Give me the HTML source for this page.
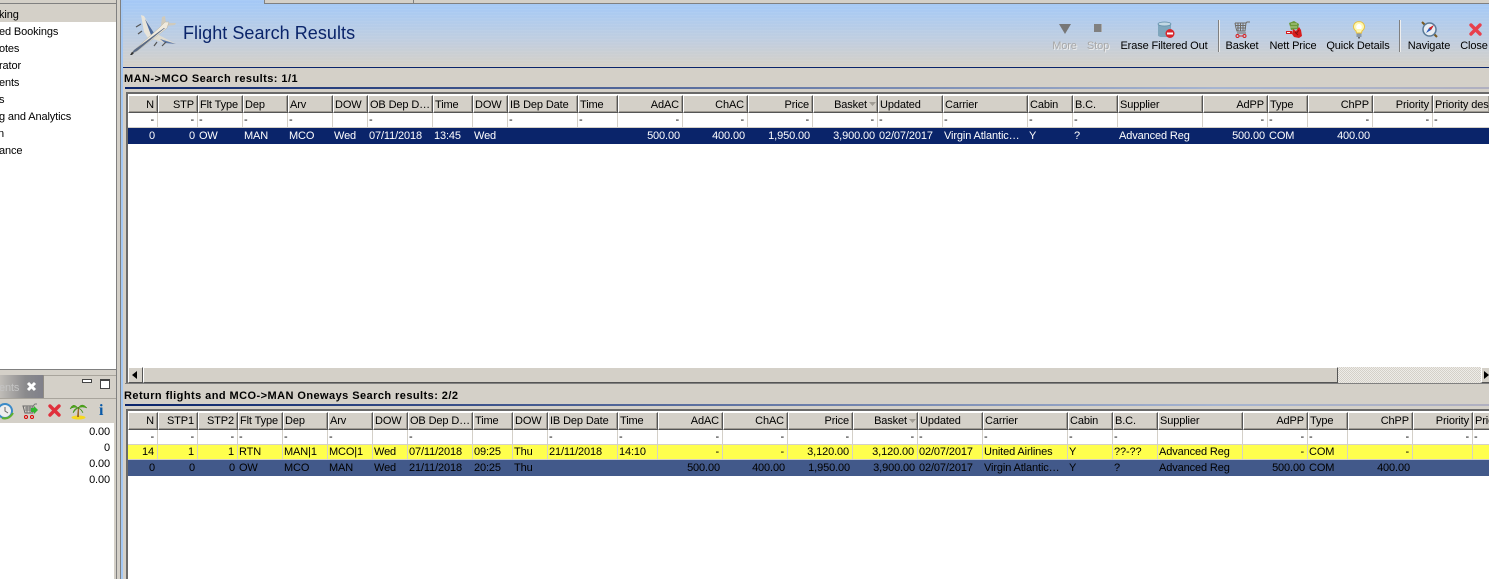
<!DOCTYPE html>
<html><head><meta charset="utf-8"><title>Flight Search Results</title>
<style>
html,body{margin:0;padding:0}
body{width:1489px;height:579px;overflow:hidden;position:relative;background:#d4d0c8;font:11px "Liberation Sans",sans-serif;letter-spacing:-.12px;color:#000}
.a{position:absolute}
.t{position:absolute;white-space:nowrap;line-height:14px}
table{position:absolute;left:128px;border-collapse:separate;border-spacing:0;table-layout:fixed;background:#fff}
td{padding:0 0 0 1px;white-space:nowrap;overflow:hidden;box-sizing:border-box;line-height:14px}
tr.h td{height:18px;background:#d4d0c8;border:1px solid;border-color:#fff #555 #555 #fff;box-shadow:inset -1px -1px 0 #a09c94;padding:0 0 0 1px}
tr.h td.r{text-align:right;padding:0 3px 0 0}
tr.f td{height:15px;background:#fff;border-right:1px solid #d4d0c8;border-bottom:1px solid #d4d0c8;padding-left:1px}
tr.y td{height:15px;background:#ffff4d;border-right:1px solid #d4d0c8;border-bottom:1px solid #d4d0c8;padding:1px 0 0 1px;line-height:13px}
tr.s td{height:16px;background:#0a246a;color:#fff;padding-left:1px}
tr.b td{height:16px;background:#42598a;color:#000;padding-left:1px}
td.r{text-align:right}
tr.f td.r,tr.s td.r,tr.b td.r{padding:0 3px 0 0}
tr.y td.r{padding:1px 3px 0 0}
.top tr.h td{padding-top:1px}
.top tr.h td.r{padding:1px 3px 0 0}
.sort{padding-right:10px !important;position:relative}
.lb{position:absolute;top:39px;white-space:nowrap;line-height:14px;transform:translateX(-50%)}
.dis{color:#a8a8a8;text-shadow:1px 1px 0 #eee}
.sep{position:absolute;top:20px;width:1px;height:32px;background:#808080;box-shadow:1px 0 0 #eee}
.bold{font-weight:bold;letter-spacing:.44px}
svg{position:absolute;overflow:visible}
</style></head><body>

<!-- left panel -->
<div class="a" style="left:0;top:0;width:116px;height:369px;background:#fff"></div>
<div class="a" style="left:0;top:0;width:116px;height:3px;background:#d4d0c8"></div>
<div class="a" style="left:0;top:3px;width:116px;height:1px;background:#808080"></div>
<div class="a" style="left:0;top:4px;width:116px;height:18px;background:#d4d0c8"></div>
<div class="t" style="left:-1px;top:8px">king</div>
<div class="t" style="left:-1px;top:25px">ed Bookings</div>
<div class="t" style="left:-1px;top:42px">otes</div>
<div class="t" style="left:-1px;top:59px">rator</div>
<div class="t" style="left:-1px;top:76px">ents</div>
<div class="t" style="left:-1px;top:93px">s</div>
<div class="t" style="left:-1px;top:110px">g and Analytics</div>
<div class="t" style="left:-2px;top:127px">n</div>
<div class="t" style="left:-1px;top:144px">ance</div>

<div class="a" style="left:116px;top:0;width:1px;height:579px;background:#808080"></div>
<div class="a" style="left:120px;top:0;width:1px;height:579px;background:#808080"></div>
<div class="a" style="left:121px;top:0;width:2px;height:579px;background:#a4c8f4"></div>

<!-- bottom-left panel -->
<div class="a" style="left:0;top:369px;width:116px;height:1px;background:#808080"></div>
<div class="a" style="left:44px;top:375px;width:72px;height:1px;background:#a8a49c"></div>
<div class="a" style="left:0;top:375px;width:43px;height:23px;background:linear-gradient(90deg,#c0bdb8,#8a8a8c 60%,#80808a)"></div>
<div class="a" style="left:43px;top:375px;width:1px;height:23px;background:#908c84"></div>
<div class="a" style="left:0;top:398px;width:116px;height:1px;background:#a8a49c"></div>
<div class="t" style="left:-1px;top:381px;color:#c4c4c4">ents</div>
<svg style="left:26px;top:381px" width="11" height="11" viewBox="0 0 11 11"><path d="M2 2l7 7M9 2l-7 7" stroke="#fff" stroke-width="3"/></svg>
<div class="a" style="left:82px;top:379px;width:8px;height:2px;border:1px solid #444;background:#fff"></div>
<div class="a" style="left:100px;top:379px;width:8px;height:7px;border:1px solid #444;border-top-width:2px;background:#fff"></div>
<svg style="left:0;top:402px" width="14" height="18" viewBox="0 0 14 18"><circle cx="5" cy="9" r="7" fill="#eee" stroke="#3a8ac8" stroke-width="2"/><path d="M5 5v4l3 2" stroke="#666" fill="none"/><path d="M2 16q7 2 11-5" stroke="#5cb030" stroke-width="2" fill="none"/></svg>
<svg style="left:22px;top:403px" width="17" height="16" viewBox="0 0 17 16"><path d="M1 3h10v7H3z" fill="none" stroke="#666"/><path d="M3 5h8M3 7h8M5 3v7M8 3v7M11 3l2-2h2" stroke="#777" fill="none"/><path d="M9 5h3V3l4 4-4 4V9H9z" fill="#2fb52f"/><circle cx="4" cy="14" r="1.5" fill="none" stroke="#d00"/><circle cx="10" cy="14" r="1.5" fill="none" stroke="#d00"/></svg>
<svg style="left:48px;top:404px" width="13" height="13" viewBox="0 0 13 13"><path d="M2 2l9 9M11 2l-9 9" stroke="#e0303c" stroke-width="3.4" stroke-linecap="round"/></svg>
<svg style="left:70px;top:402px" width="17" height="18" viewBox="0 0 17 18"><ellipse cx="8.500" cy="15.500" rx="7" ry="2" fill="#f6d820"/><path d="M8 5l1 0 0 10h-2z" fill="#9a6a28"/><path d="M8 6Q3 0 0 7q4-3 8-1Q12 0 17 6q-5-2-9 0Q4 6 3 11q3-4 5-5 3 1 5 5-1-4-5-5" fill="#4ca818" stroke="#3a8a10" stroke-width=".5"/></svg>
<div class="t" style="left:99px;top:403px;font:bold 16px 'Liberation Serif',serif;color:#0a5aa8;line-height:16px;letter-spacing:0">i</div>
<div class="a" style="left:0;top:423px;width:114px;height:156px;background:#fff"></div>
<div class="a" style="left:114px;top:399px;width:2px;height:180px;background:#d4d0c8"></div>
<div class="t" style="right:1379px;top:425px">0.00</div>
<div class="t" style="right:1379px;top:441px">0</div>
<div class="t" style="right:1379px;top:457px">0.00</div>
<div class="t" style="right:1379px;top:473px">0.00</div>

<!-- banner -->
<div class="a" style="left:123px;top:0;width:1366px;height:67px;background:repeating-linear-gradient(180deg,rgba(255,255,255,.05) 0 1px,rgba(255,255,255,0) 1px 3px),linear-gradient(180deg,#a4c8f6 0,#a8caf4 8px,#c0cee0 40px,#d4d0c8 66px)"></div>
<div class="a" style="left:264px;top:0;width:1225px;height:3px;background:#d4d0c8;border-bottom:1px solid #808080;border-left:1px solid #808080"></div>
<div class="a" style="left:413px;top:0;width:1px;height:3px;background:#808080"></div>
<div class="a" style="left:123px;top:67px;width:1366px;height:1px;background:#0a246a"></div>

<!-- plane -->
<svg style="left:129px;top:13px" width="50" height="42" viewBox="0 0 50 42">
<path d="M12 2l3 1 10 17-6 5-4-6z" fill="#e8e4da"/>
<path d="M16 6l9 14-3 2z" fill="#4c6a9c"/>
<path d="M21 25l5-5 21 11-11-1z" fill="#e0dcd0"/>
<path d="M31 26l16 5-11-1z" fill="#5c78a8"/>
<path d="M33 4l3-1 1 7 10 0-1 2-9 1-5-1z" fill="#cfcabc"/>
<path d="M2 40L30 15l6-6 4 0-2 6L7 39z" fill="#f0eadd" stroke="#b8b4a4" stroke-width=".5"/>
<path d="M2 41L8 38 36 15l-1 0L5 37z" fill="#5a6a84"/>
<path d="M1 42l2-3 2 1-2 2z" fill="#333"/>
<path d="M7 14l5-3M9 21l4-3M25 33l3-4M33 33l4-4" stroke="#555" stroke-width="1.2"/>
</svg>
<div class="t" style="left:183px;top:22px;font-size:18px;line-height:22px;color:#0a246a;letter-spacing:.05px">Flight Search Results</div>

<!-- toolbar icons -->
<svg style="left:1058px;top:23px" width="14" height="12" viewBox="0 0 14 12"><path d="M1 1h12L7 11z" fill="#777"/></svg>
<div class="a" style="left:1094px;top:24px;width:8px;height:8px;background:#808080;border-right:1px solid #aaa;box-sizing:border-box"></div>
<svg style="left:1157px;top:21px" width="18" height="18" viewBox="0 0 18 18"><path d="M1 3v11q0 2 5 2h4V3z" fill="#6f9cb6"/><path d="M1 3h13v6H10v7H6q-5 0-5-2z" fill="#7fa6bc"/><ellipse cx="7.500" cy="3" rx="6.500" ry="2" fill="#c2d8e4" stroke="#5a8aa6" stroke-width=".7"/><circle cx="13" cy="12.500" r="4.500" fill="#d8262c"/><rect x="10" y="11.500" width="6" height="2" fill="#fff"/></svg>
<svg style="left:1234px;top:21px" width="17" height="17" viewBox="0 0 17 17"><path d="M1 2h11l1-1h3M1 2l1 5 1 3h8l1-8M2 4.500h10M3 7h9M4 2v8M6.500 2v8M9 2v8" fill="none" stroke="#6e6a64"/><path d="M3 12h9" stroke="#6e6a64"/><circle cx="3.500" cy="15" r="1.500" fill="none" stroke="#d82020"/><circle cx="10.500" cy="15" r="1.500" fill="none" stroke="#d82020"/><path d="M5 15h4" stroke="#d82020"/></svg>
<svg style="left:1286px;top:21px" width="17" height="17" viewBox="0 0 17 17"><path d="M3 2l5-2 5 3-1 5-7 1z" fill="#6c9a3c"/><path d="M5 3h6M4 6h7" stroke="#b8d090"/><path d="M0 10h6v3H0z" fill="#d81c1c"/><path d="M1 11h3v1H1z" fill="#fff"/><path d="M7 8l3 2 3-4 2 3 1 6-3 2-5-1-2-3z" fill="#d81c1c"/><path d="M9 11l3 3M13 9l-3 4" stroke="#8a1010"/></svg>
<svg style="left:1353px;top:21px" width="12" height="18" viewBox="0 0 12 18"><path d="M6 .700a5 5 0 0 1 3 9.300l-.5 2h-5l-.5-2A5 5 0 0 1 6 .700z" fill="#fff8b0" stroke="#e8c040"/><path d="M6 3a3 3 0 0 1 2 5H4A3 3 0 0 1 6 3z" fill="#fff"/><rect x="3.500" y="12.500" width="5" height="3.500" fill="#8a98a8"/><rect x="5" y="16" width="2" height="1.500" fill="#666"/></svg>
<svg style="left:1421px;top:21px" width="17" height="17" viewBox="0 0 17 17"><path d="M1 1l15 15" stroke="#7a5a20" stroke-width="2"/><circle cx="8.500" cy="8.500" r="6.500" fill="#e8eef4" stroke="#5a7a98" stroke-width="1.500"/><path d="M5 12l3-5 5-3-3 5z" fill="#2a5ab8"/><path d="M8 7l5-3-3 5z" fill="#d82020"/></svg>
<svg style="left:1469px;top:23px" width="13" height="13" viewBox="0 0 13 13"><path d="M2 2l9 9M11 2l-9 9" stroke="#e8404c" stroke-width="3.400" stroke-linecap="round"/></svg>
<div class="sep" style="left:1218px"></div>
<div class="sep" style="left:1399px"></div>

<div class="lb dis" style="left:1064.500px">More</div>
<div class="lb dis" style="left:1098px">Stop</div>
<div class="lb" style="left:1164px">Erase Filtered Out</div>
<div class="lb" style="left:1242px">Basket</div>
<div class="lb" style="left:1293px">Nett Price</div>
<div class="lb" style="left:1358px">Quick Details</div>
<div class="lb" style="left:1429px">Navigate</div>
<div class="lb" style="left:1474px">Close</div>

<!-- section 1 -->
<div class="t bold" style="left:124px;top:72px">MAN-&gt;MCO Search results: 1/1</div>
<div class="a" style="left:125px;top:87px;width:1364px;height:2px;background:linear-gradient(90deg,#0a246a,#a6b4d0 80%,#b0b0c0)"></div>
<div class="a" style="left:126px;top:92px;width:1363px;height:291px;background:#fff;border-top:2px solid #6a6a6a;border-left:2px solid #6a6a6a;box-sizing:border-box"></div>

<table class="top" style="top:95px;width:1362px">
<colgroup><col style="width:30px"><col style="width:40px"><col style="width:45px"><col style="width:45px"><col style="width:45px"><col style="width:35px"><col style="width:65px"><col style="width:40px"><col style="width:35px"><col style="width:70px"><col style="width:40px"><col style="width:65px"><col style="width:65px"><col style="width:65px"><col style="width:65px"><col style="width:65px"><col style="width:85px"><col style="width:45px"><col style="width:45px"><col style="width:85px"><col style="width:65px"><col style="width:40px"><col style="width:65px"><col style="width:60px"><col style="width:57px"></colgroup>
<tr class="h"><td class="r">N</td><td class="r">STP</td><td>Flt Type</td><td>Dep</td><td>Arv</td><td>DOW</td><td>OB Dep D…</td><td>Time</td><td>DOW</td><td>IB Dep Date</td><td>Time</td><td class="r">AdAC</td><td class="r">ChAC</td><td class="r">Price</td><td class="r sort">Basket<svg style="right:1px;top:6px" width="7" height="4"><path d="M0 0h7L3.500 4z" fill="#a09c94"/></svg></td><td>Updated</td><td>Carrier</td><td>Cabin</td><td>B.C.</td><td>Supplier</td><td class="r">AdPP</td><td>Type</td><td class="r">ChPP</td><td class="r">Priority</td><td>Priority des</td></tr>
<tr class="f"><td class="r">-</td><td class="r">-</td><td>-</td><td>-</td><td>-</td><td></td><td>-</td><td></td><td></td><td>-</td><td>-</td><td class="r">-</td><td class="r">-</td><td class="r">-</td><td class="r">-</td><td>-</td><td>-</td><td>-</td><td>-</td><td></td><td class="r">-</td><td>-</td><td class="r">-</td><td class="r">-</td><td>-</td></tr>
<tr class="s"><td class="r">0</td><td class="r">0</td><td>OW</td><td>MAN</td><td>MCO</td><td>Wed</td><td>07/11/2018</td><td>13:45</td><td>Wed</td><td></td><td></td><td class="r">500.00</td><td class="r">400.00</td><td class="r">1,950.00</td><td class="r">3,900.00</td><td>02/07/2017</td><td>Virgin Atlantic…</td><td>Y</td><td>?</td><td>Advanced Reg</td><td class="r">500.00</td><td>COM</td><td class="r">400.00</td><td></td><td></td></tr>
</table>

<!-- scrollbar -->
<div class="a" style="left:128px;top:367px;width:1361px;height:16px;background-color:#eeece8;background-image:linear-gradient(45deg,#d4d0c8 25%,transparent 25%,transparent 75%,#d4d0c8 75%),linear-gradient(45deg,#d4d0c8 25%,transparent 25%,transparent 75%,#d4d0c8 75%);background-size:2px 2px;background-position:0 0,1px 1px"></div>
<div class="a" style="left:128px;top:367px;width:15px;height:16px;background:#d4d0c8;border:1px solid;border-color:#fff #555 #555 #fff;box-sizing:border-box"></div>
<svg style="left:132px;top:371px" width="5" height="8"><path d="M5 0v8L0 4z" fill="#000"/></svg>
<div class="a" style="left:143px;top:367px;width:1195px;height:16px;background:#d4d0c8;border:1px solid;border-color:#fff #555 #555 #fff;box-sizing:border-box"></div>
<div class="a" style="left:1481px;top:367px;width:15px;height:16px;background:#d4d0c8;border:1px solid;border-color:#fff #555 #555 #fff;box-sizing:border-box"></div>
<svg style="left:1484px;top:371px" width="5" height="8"><path d="M0 0v8l5-4z" fill="#000"/></svg>
<div class="a" style="left:125px;top:383px;width:1364px;height:1px;background:#808080"></div>

<!-- section 2 -->
<div class="t bold" style="left:124px;top:389px">Return flights and MCO-&gt;MAN Oneways Search results: 2/2</div>
<div class="a" style="left:125px;top:404px;width:1364px;height:2px;background:linear-gradient(90deg,#0a246a,#a6b4d0 80%,#b0b0c0)"></div>
<div class="a" style="left:126px;top:409px;width:1363px;height:170px;background:#fff;border-top:2px solid #6a6a6a;border-left:2px solid #6a6a6a;box-sizing:border-box"></div>

<table style="top:412px;width:1385px">
<colgroup><col style="width:30px"><col style="width:40px"><col style="width:40px"><col style="width:45px"><col style="width:45px"><col style="width:45px"><col style="width:35px"><col style="width:65px"><col style="width:40px"><col style="width:35px"><col style="width:70px"><col style="width:40px"><col style="width:65px"><col style="width:65px"><col style="width:65px"><col style="width:65px"><col style="width:65px"><col style="width:85px"><col style="width:45px"><col style="width:45px"><col style="width:85px"><col style="width:65px"><col style="width:40px"><col style="width:65px"><col style="width:60px"><col style="width:40px"></colgroup>
<tr class="h"><td class="r">N</td><td class="r">STP1</td><td class="r">STP2</td><td>Flt Type</td><td>Dep</td><td>Arv</td><td>DOW</td><td>OB Dep D…</td><td>Time</td><td>DOW</td><td>IB Dep Date</td><td>Time</td><td class="r">AdAC</td><td class="r">ChAC</td><td class="r">Price</td><td class="r sort">Basket<svg style="right:1px;top:6px" width="7" height="4"><path d="M0 0h7L3.500 4z" fill="#a09c94"/></svg></td><td>Updated</td><td>Carrier</td><td>Cabin</td><td>B.C.</td><td>Supplier</td><td class="r">AdPP</td><td>Type</td><td class="r">ChPP</td><td class="r">Priority</td><td>Priority des</td></tr>
<tr class="f"><td class="r">-</td><td class="r">-</td><td class="r">-</td><td>-</td><td>-</td><td>-</td><td></td><td>-</td><td></td><td></td><td>-</td><td>-</td><td class="r">-</td><td class="r">-</td><td class="r">-</td><td class="r">-</td><td>-</td><td>-</td><td>-</td><td>-</td><td></td><td class="r">-</td><td>-</td><td class="r">-</td><td class="r">-</td><td>-</td></tr>
<tr class="y"><td class="r">14</td><td class="r">1</td><td class="r">1</td><td>RTN</td><td>MAN|1</td><td>MCO|1</td><td>Wed</td><td>07/11/2018</td><td>09:25</td><td>Thu</td><td>21/11/2018</td><td>14:10</td><td class="r">-</td><td class="r">-</td><td class="r">3,120.00</td><td class="r">3,120.00</td><td>02/07/2017</td><td>United Airlines</td><td>Y</td><td>??-??</td><td>Advanced Reg</td><td class="r">-</td><td>COM</td><td class="r">-</td><td></td><td></td></tr>
<tr class="b"><td class="r">0</td><td class="r">0</td><td class="r">0</td><td>OW</td><td>MCO</td><td>MAN</td><td>Wed</td><td>21/11/2018</td><td>20:25</td><td>Thu</td><td></td><td></td><td class="r">500.00</td><td class="r">400.00</td><td class="r">1,950.00</td><td class="r">3,900.00</td><td>02/07/2017</td><td>Virgin Atlantic…</td><td>Y</td><td>?</td><td>Advanced Reg</td><td class="r">500.00</td><td>COM</td><td class="r">400.00</td><td></td><td></td></tr>
</table>

</body></html>
